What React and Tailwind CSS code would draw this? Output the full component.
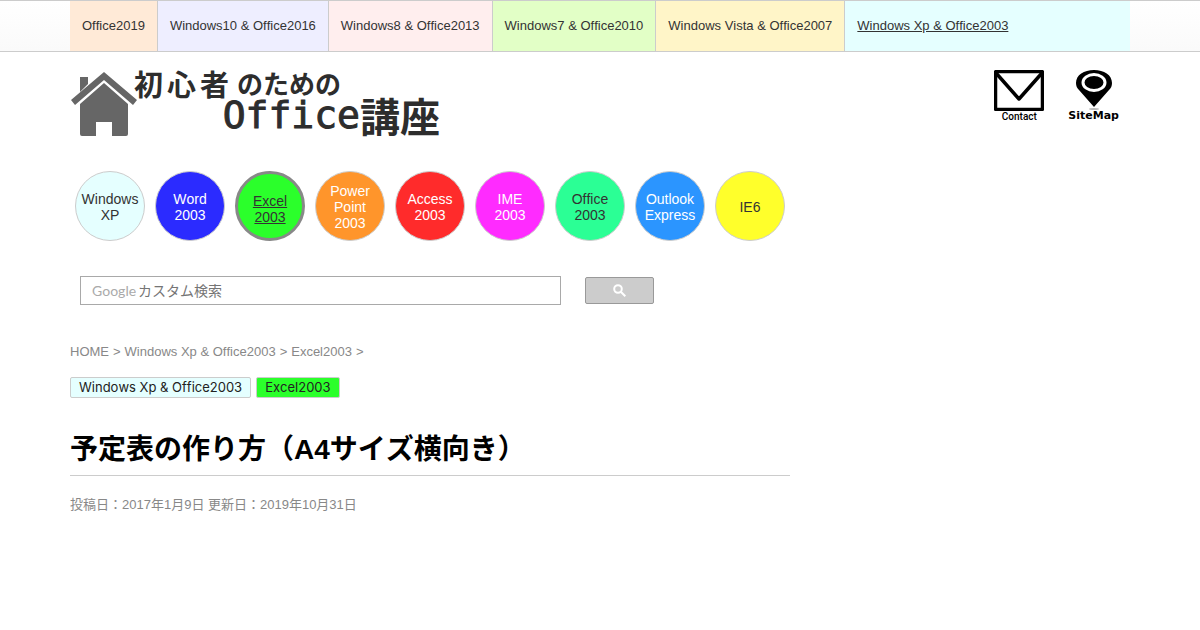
import React from 'react';

const versions = [
  { name: 'Office2019', color: 'bg-[#ffead7]' },
  { name: 'Windows10 & Office2016', color: 'bg-[#eeeeff]' },
  { name: 'Windows8 & Office2013', color: 'bg-[#ffeeee]' },
  { name: 'Windows7 & Office2010', color: 'bg-[#e2ffc6]' },
  { name: 'Windows Vista & Office2007', color: 'bg-[#fff5c8]' },
];

const apps = [
  { lines: ['Windows', 'XP'], color: 'bg-[#e5ffff] text-[#333]' },
  { lines: ['Word', '2003'], color: 'bg-[#2b2bff] text-white' },
  { lines: ['Excel', '2003'], color: 'bg-[#2bff2b] text-[#333]', current: true },
  { lines: ['Power', 'Point', '2003'], color: 'bg-[#ff952b] text-white' },
  { lines: ['Access', '2003'], color: 'bg-[#ff2b2b] text-white' },
  { lines: ['IME', '2003'], color: 'bg-[#ff2bff] text-white' },
  { lines: ['Office', '2003'], color: 'bg-[#2bff95] text-[#333]' },
  { lines: ['Outlook', 'Express'], color: 'bg-[#2b95ff] text-white' },
  { lines: ['IE6'], color: 'bg-[#ffff2b] text-[#333]' },
];

const HouseIcon = () => (
  <svg width="68" height="66" viewBox="0 0 68 66" fill="#666" aria-hidden="true">
    <path d="M10 7h8v7l-8 8z" />
    <path d="M34 2 67 30l-4 5L34 10 5 35l-4-5z" />
    <path d="M34 13 58 34v30a2 2 0 0 1-2 2H42V52H26v14H12a2 2 0 0 1-2-2V34z" />
  </svg>
);

const MailIcon = () => (
  <svg width="50" height="41" viewBox="0 0 50 41" fill="none" stroke="#000" aria-hidden="true">
    <rect x="1.5" y="1.5" width="47" height="38" rx="1" strokeWidth="3.5" />
    <path d="M2 3 25 29 48 3" strokeWidth="3.5" strokeLinejoin="round" />
  </svg>
);

const PinIcon = () => (
  <svg width="38" height="41" viewBox="0 0 38 41" aria-hidden="true">
    <ellipse cx="19" cy="39" rx="5" ry="1" fill="#bbb" />
    <path d="M19 37 4 20C2 18 1 16 1 13 1 5 9 0 19 0s18 5 18 13c0 3-1 5-3 7z" />
    <ellipse cx="19" cy="12.500" rx="11" ry="8" fill="none" stroke="#fff" strokeWidth="3" />
  </svg>
);

const SearchIcon = () => (
  <svg width="13" height="13" viewBox="0 0 13 13" fill="none" stroke="#fff" strokeWidth="2" aria-hidden="true">
    <circle cx="5" cy="5" r="3.800" />
    <path d="m7.800 7.800 4.500 4.500" />
  </svg>
);

const VersionNav = () => (
  <nav className="border-y border-[#ccc] bg-linear-to-b from-white to-[#fafafa]">
    <ul className="mx-auto flex max-w-[1060px] text-[13px] leading-[50px] text-[#333]">
      {versions.map((v) => (
        <li key={v.name} className={`border-r border-[#ccc] ${v.color}`}>
          <a href="#" className="block px-3 whitespace-nowrap">{v.name}</a>
        </li>
      ))}
      <li className="flex-1 bg-[#e5ffff]">
        <a href="#" className="block px-3 whitespace-nowrap underline" aria-current="page">
          Windows Xp &amp; Office2003
        </a>
      </li>
    </ul>
  </nav>
);

const SiteHeader = () => (
  <header className="flex items-start justify-between pt-4.5">
    <a href="#" className="flex font-['Noto_Sans_CJK_JP',sans-serif] font-bold text-[#2d2d2d]">
      <HouseIcon />
      <span className="-ml-1 flex w-[306px] flex-col">
        <span className="flex h-[26px] items-center leading-[26px]">
          <span className="flex gap-1 pr-2 text-[29px]">
            <span>初</span>
            <span>心</span>
            <span>者</span>
          </span>
          <span className="text-[26px]">のための</span>
        </span>
        <span className="flex h-[38px] items-center self-end text-[40px] leading-[38px]">
          <span className="font-['DejaVu_Sans_Mono',monospace] text-[38px] font-normal [-webkit-text-stroke:1px_#2d2d2d]">
            Office
          </span>
          <span>講座</span>
        </span>
      </span>
    </a>
    <div className="flex gap-6 pr-[11px] text-black">
      <a href="#" className="flex flex-col items-center">
        <MailIcon />
        <span className="font-[Roboto,sans-serif] text-[10px] leading-[11px] font-medium">Contact</span>
      </a>
      <a href="#" className="flex flex-col items-center">
        <PinIcon />
        <span className="font-['DejaVu_Sans',sans-serif] text-[11px] leading-[9px] font-bold">SiteMap</span>
      </a>
    </div>
  </header>
);

const AppNav = () => (
  <ul className="flex flex-wrap gap-2.5 px-[5px] pt-[35px] text-center text-sm leading-4">
    {apps.map((app) => (
      <li key={app.lines.join(' ')}>
        <a
          href="#"
          className={`flex size-[70px] flex-col items-center justify-center rounded-full ${app.color} ${
            app.current ? 'border-3 border-[#888] pt-1.5 underline' : 'border border-[#ccc] pt-0.5'
          }`}
        >
          {app.lines.map((line) => (
            <span key={line}>{line}</span>
          ))}
        </a>
      </li>
    ))}
  </ul>
);

const SearchForm = () => (
  <form className="flex items-center gap-6 px-2.5 pt-[35px]" onSubmit={(e) => e.preventDefault()}>
    <div className="flex h-[29px] w-[481px] items-center gap-0.5 border border-[#a9a9a9] px-[11px]">
      <label htmlFor="q" className="font-[Lato,sans-serif] text-sm text-[#aaa]">Google</label>
      <input
        id="q"
        type="text"
        placeholder="カスタム検索"
        className="min-w-0 flex-1 text-sm outline-none placeholder:text-[#757575]"
      />
    </div>
    <button
      type="submit"
      aria-label="検索"
      className="flex h-[27px] w-[69px] items-center justify-center rounded-xs border border-[#999] bg-[#ccc]"
    >
      <SearchIcon />
    </button>
  </form>
);

const Article = () => (
  <main className="max-w-[720px] text-[13px] text-[#888]">
    <nav className="flex gap-1 pt-[37px] leading-5">
      <a href="#">HOME</a>
      <span>&gt;</span>
      <a href="#">Windows Xp &amp; Office2003</a>
      <span>&gt;</span>
      <a href="#">Excel2003</a>
      <span>&gt;</span>
    </nav>
    <div className="flex gap-[5px] pt-[15px] font-[Inter,sans-serif] text-[13px] leading-[19px] text-[#222]">
      <a href="#" className="rounded-xs border border-[#ccc] bg-[#e5ffff] px-2">Windows Xp &amp; Office2003</a>
      <a href="#" className="rounded-xs border border-[#ccc] bg-[#2bff2b] px-2">Excel2003</a>
    </div>
    <h1 className="mt-8 border-b border-[#ccc] pb-[5px] text-[28px] leading-10 font-bold text-black">
      予定表の作り方（A4サイズ横向き）
    </h1>
    <p className="pt-[19px] leading-5">投稿日：2017年1月9日 更新日：2019年10月31日</p>
  </main>
);

const App = () => (
  <div className="bg-white font-['Liberation_Sans','Noto_Sans_CJK_JP',sans-serif] [font-kerning:none]">
    <VersionNav />
    <div className="mx-auto max-w-[1060px]">
      <SiteHeader />
      <AppNav />
      <SearchForm />
      <Article />
    </div>
  </div>
);

export default App;
